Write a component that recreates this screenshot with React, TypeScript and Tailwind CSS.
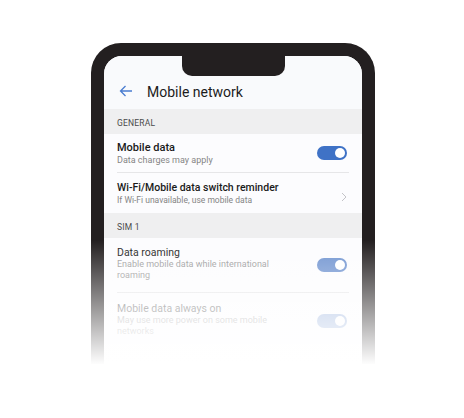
import React from "react";

// Simple toggle pill, on state only
function Toggle({ color }: { color: string }) {
  return (
    <div className={`w-[30px] h-[14px] rounded-full flex items-center justify-end pr-[2px] ${color}`}>
      <div className="w-[10px] h-[10px] rounded-full bg-white" />
    </div>
  );
}

function SectionBar({ label }: { label: string }) {
  return (
    <div className="h-[25px] bg-[#efeff0] flex items-center pl-[13px] pt-[3px] text-[8.5px] text-[#4a4a4a] tracking-[0.2px]">
      {label}
    </div>
  );
}

export default function App() {
  return (
    <div
      className="relative w-[464px] h-[418px] overflow-hidden bg-white"
      style={{ fontFamily: "Roboto, 'Noto Sans', sans-serif" }}
    >
      {/* phone frame */}
      <div className="ml-[91px] mt-[43px] w-[284px] h-[420px] border-[13px] border-b-0 border-[#231f20] rounded-t-[30px] bg-[#231f20]">
        <div className="relative h-full rounded-t-[18px] bg-[#fcfcfd] overflow-hidden">
          {/* notch */}
          <div className="absolute left-[78px] top-0 w-[103px] h-[20px] bg-[#231f20] rounded-b-[10px]" />

          {/* header */}
          <div className="h-[53px] bg-[#f9fafc] flex items-end pb-[8px] pl-[15px]">
            <svg width="14" height="12" viewBox="0 0 14 12" className="mb-[4px]">
              <path d="M13 6H1.5M6.5 1L1.5 6l5 5" fill="none" stroke="#4a7cd0" strokeWidth="1.3" />
            </svg>
            <span className="ml-[14px] text-[14px] text-[#1c1c1c] leading-none mb-[2px]">Mobile network</span>
          </div>

          <SectionBar label="GENERAL" />

          <div className="bg-[#fcfcfe] px-[13px]">
            <div className="h-[39px] flex items-center justify-between border-b border-[#e6e6e8] pr-[2px]">
              <div className="flex flex-col">
                <span className="text-[11px] font-medium text-[#1a1a1a] leading-[13px]">Mobile data</span>
                <span className="text-[9px] text-[#858585] leading-[12px]">Data charges may apply</span>
              </div>
              <Toggle color="bg-[#3f72c6]" />
            </div>
            <div className="h-[40px] flex items-center justify-between">
              <div className="flex flex-col">
                <span className="text-[10.5px] font-medium text-[#1a1a1a] leading-[13px]">Wi-Fi/Mobile data switch reminder</span>
                <span className="text-[8.5px] text-[#858585] leading-[12px]">If Wi-Fi unavailable, use mobile data</span>
              </div>
              <svg width="6" height="10" viewBox="0 0 6 10" className="mr-[2px] mt-[8px]">
                <path d="M1 1l4 4-4 4" fill="none" stroke="#c4c4c8" strokeWidth="1" />
              </svg>
            </div>
          </div>

          <SectionBar label="SIM 1" />

          <div className="bg-[#fcfcfe] px-[13px]">
            <div className="h-[55px] flex items-center justify-between border-b border-[#e6e6e8] pr-[2px]">
              <div className="flex flex-col w-[180px] pb-[3px]">
                <span className="text-[10.5px] text-[#1a1a1a] leading-[13px]">Data roaming</span>
                <span className="text-[9px] text-[#9a9a9a] leading-[11px]">Enable mobile data while international roaming</span>
              </div>
              <Toggle color="bg-[#6f93d0]" />
            </div>
            <div className="h-[55px] flex items-center justify-between pr-[2px] opacity-60">
              <div className="flex flex-col w-[180px] pb-[3px]">
                <span className="text-[10.5px] text-[#1a1a1a] leading-[13px]">Mobile data always on</span>
                <span className="text-[9px] text-[#858585] leading-[11px]">May use more power on some mobile networks</span>
              </div>
              <Toggle color="bg-[#6f93d0]" />
            </div>
          </div>
        </div>
      </div>

      {/* fade out toward the bottom */}
      <div className="absolute left-0 right-0 top-[240px] h-[125px] bg-gradient-to-b from-white/0 via-white/50 to-white" />
      <div className="absolute left-0 right-0 top-[364px] bottom-0 bg-white" />
    </div>
  );
}
